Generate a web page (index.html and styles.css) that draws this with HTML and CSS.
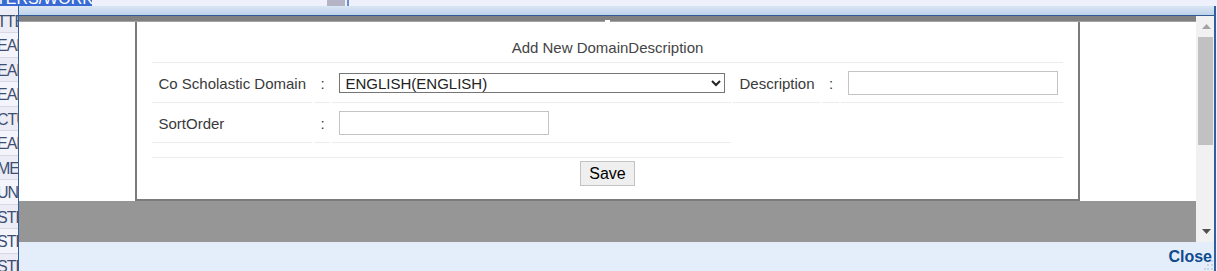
FILE: index.html
```html
<!DOCTYPE html>
<html lang="en">

<head>
    <meta charset="UTF-8" />
    <title>Add New DomainDescription</title>
    <link rel="stylesheet" href="styles.css">
</head>

<body>

    <!-- page behind the popup -->
    <div class="page">
        <div class="page-top">
            <div class="page-tab"><span>TERS/WORK</span></div>
            <div class="page-gap"></div>
            <div class="page-scroll"></div>
            <div class="page-line"></div>
        </div>
        <ul class="menu-list">
            <li>TTENDANCE</li>
            <li>EADING</li>
            <li>EADING</li>
            <li>EADING</li>
            <li>CTURE</li>
            <li>EADING</li>
            <li>MENT</li>
            <li>UNIT</li>
            <li>STEM</li>
            <li>STEM</li>
            <li>STEM</li>
        </ul>
    </div>

    <div class="dialog">
        <div class="dialog-title"></div>

        <div class="dialog-body">
            <div class="frame">
                <div class="frame-top"><span class="frame-notch"></span></div>

                <div class="frame-page">
                    <div class="panel">
                        <table class="form-table">
                            <colgroup>
                                <col class="c-label">
                                <col class="c-sep">
                                <col class="c-field">
                                <col class="c-label2">
                                <col class="c-sep2">
                                <col class="c-field2">
                            </colgroup>
                            <tr>
                                <td colspan="6" class="caption">Add New DomainDescription</td>
                            </tr>
                            <tr>
                                <td class="lbl">Co Scholastic Domain</td>
                                <td class="sep">:</td>
                                <td class="fld">
                                    <select class="domain-select">
                                        <option>ENGLISH(ENGLISH)</option>
                                        <option>HINDI(HINDI)</option>
                                    </select>
                                </td>
                                <td class="lbl">Description</td>
                                <td class="sep">:</td>
                                <td class="fld"><input type="text" class="text-box"></td>
                            </tr>
                            <tr>
                                <td class="lbl">SortOrder</td>
                                <td class="sep">:</td>
                                <td class="fld"><input type="text" class="text-box"></td>
                                <td colspan="3" class="blank"></td>
                            </tr>
                            <tr>
                                <td colspan="6" class="spacer"></td>
                            </tr>
                            <tr>
                                <td colspan="6" class="actions"><button class="save-btn">Save</button></td>
                            </tr>
                        </table>
                    </div>
                </div>

                <div class="frame-bottom"></div>
            </div>

            <div class="scrollbar">
                <div class="sb-btn">
                    <svg width="9" height="5" viewBox="0 0 9 5"><polygon points="0,5 9,5 4.5,0" fill="#a3a3a3" /></svg>
                </div>
                <div class="sb-thumb"></div>
                <div class="sb-track"></div>
                <div class="sb-btn">
                    <svg width="9" height="5" viewBox="0 0 9 5"><polygon points="0,0 9,0 4.5,5" fill="#505050" /></svg>
                </div>
            </div>
        </div>

        <div class="dialog-footer">
            <a class="close-link">Close</a>
        </div>

        <svg class="grip" width="10" height="12" viewBox="0 0 10 12">
            <rect x="7" y="1" width="2" height="2" fill="#c9d3df" />
            <rect x="7" y="5" width="2" height="2" fill="#c9d3df" />
            <rect x="3" y="5" width="2" height="2" fill="#c9d3df" />
            <rect x="7" y="9" width="2" height="2" fill="#c9d3df" />
            <rect x="3" y="9" width="2" height="2" fill="#c9d3df" />
            <rect x="0" y="9" width="2" height="2" fill="#c9d3df" />
        </svg>
    </div>

</body>

</html>
```

FILE: styles.css
```css
* {
    box-sizing: border-box;
    margin: 0;
    padding: 0;
    font-family: 'Liberation Sans', Arial, sans-serif;
}

body {
    width: 1217px;
    height: 271px;
    overflow: hidden;
    position: relative;
    background: #eef0fb;
}

/* ---------- page behind ---------- */

.page-top {
    display: flex;
    height: 6px;
}

.page-tab {
    width: 92px;
    height: 6px;
    overflow: hidden;
    background: #3a6bd4;
    color: #fff;
    font-size: 16px;
    line-height: 18px;
    white-space: nowrap;
}

.page-tab span {
    display: block;
    margin-top: -10px;
    margin-left: -4px;
}

.page-gap {
    width: 235px;
}

.page-scroll {
    width: 18px;
    background: #b4b4c6;
}

.page-line {
    width: 2px;
    margin-left: 2px;
    background: #6b8ecf;
}

.menu-list {
    list-style: none;
    width: 120px;
    padding-top: 2.5px;
}

.menu-list li {
    height: 24.5px;
    padding-top: 3px;
    line-height: 20.5px;
    font-size: 16px;
    letter-spacing: -1px;
    color: #3e4f72;
    background: #ececf6;
    border-bottom: 1px solid #d8d8e4;
    white-space: nowrap;
    overflow: hidden;
    text-indent: -3px;
}

.menu-list li:nth-child(even) {
    background: #f4f4fc;
}

/* ---------- popup ---------- */

.dialog {
    position: absolute;
    left: 18px;
    top: 6px;
    width: 1198px;
    height: 265px;
    border-left: 1px solid #2f5f9e;
    border-right: 2px solid #2f5f9e;
    overflow: hidden;
    background: #e4eefa;
}

.dialog-title {
    height: 10px;
    background: linear-gradient(#d8e5f4, #bfd2ea);
    border-bottom: 1px solid #2f5b96;
}

.dialog-body {
    display: flex;
    height: 226px;
}

.frame {
    width: 1177px;
    display: flex;
    flex-direction: column;
}

.frame-top {
    height: 6px;
    background: #808080;
    border-bottom: 1px solid #a3a3a3;
    display: flex;
    justify-content: center;
    align-items: flex-end;
}

.frame-notch {
    width: 5px;
    height: 2px;
    margin-bottom: -1px;
    background: #fff;
}

.frame-page {
    background: #fff;
}

.frame-bottom {
    flex: 1;
    background: #969696;
}

.panel {
    width: 945px;
    margin: 0 auto;
    border-left: 2px solid #7b7b7b;
    border-right: 2px solid #7b7b7b;
    border-bottom: 2px solid #7b7b7b;
    background: #fff;
}

.form-table {
    table-layout: fixed;
    width: 914px;
    margin: 0 auto;
    border-spacing: 2px;
    font-size: 15px;
    color: #3a3a3a;
}

.c-label { width: 160px; }
.c-sep { width: 16px; }
.c-field { width: 399px; }
.c-label2 { width: 87px; }
.c-sep2 { width: 17px; }
.c-field2 { width: 221px; }

.form-table td {
    border-bottom: 1px solid #ececec;
    vertical-align: middle;
}

.caption {
    text-align: center;
    padding: 15px 0 6px;
    color: #444;
}

.lbl {
    padding: 6px 0 7px 6px;
    white-space: nowrap;
}

.sep {
    text-align: center;
    padding: 6px 0 7px;
}

.fld {
    padding: 6px 0 7px 7px;
    height: 38px;
}

.form-table td.blank {
    border-bottom: none;
}

.spacer {
    height: 13px;
}

.form-table td.actions {
    text-align: center;
    padding: 1px 0 11px;
    border-bottom: none;
}

.domain-select {
    display: block;
    width: 386px;
    height: 20px;
    border: 1px solid #767676;
    border-radius: 0;
    background: #fff;
    font-size: 15px;
    color: #222;
    padding-left: 1px;
}

.text-box {
    display: block;
    width: 210px;
    height: 24px;
    border: 1px solid #c4c4c4;
    background: #fff;
    font-size: 15px;
}

.save-btn {
    width: 55px;
    height: 25px;
    border: 1px solid #c3c3c3;
    background: #efefef;
    font-size: 16px;
    color: #000;
    vertical-align: top;
}

.scrollbar {
    width: 18px;
    background: #f1f1f1;
    display: flex;
    flex-direction: column;
}

.sb-btn {
    height: 21px;
    display: flex;
    align-items: center;
    justify-content: center;
    padding-left: 2px;
}

.sb-thumb {
    height: 108px;
    margin: 0 1px 0 2px;
    background: #c1c1c1;
}

.sb-track {
    flex: 1;
}

.dialog-footer {
    text-align: right;
    padding: 6px 2px 0 0;
}

.close-link {
    font-size: 16px;
    font-weight: 700;
    line-height: 18px;
    color: #0f4b8e;
    cursor: pointer;
}

.grip {
    position: absolute;
    right: 0;
    bottom: 0;
}
```
